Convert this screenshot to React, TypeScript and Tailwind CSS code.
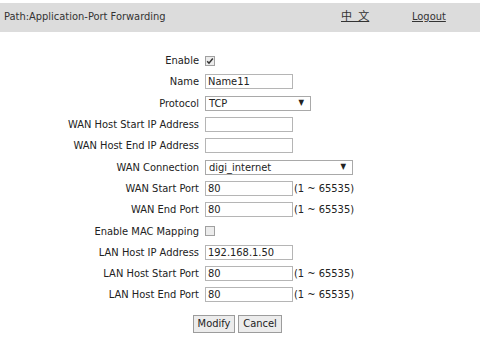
import React from "react";

const font = { fontFamily: '"DejaVu Sans Condensed", "DejaVu Sans", "Noto Sans CJK SC", sans-serif' };

type Row = {
    label: string;
    kind: "check" | "text" | "select";
    value?: string;
    checked?: boolean;
    width?: string;
    range?: boolean;
};

const rows: Row[] = [
    { label: "Enable", kind: "check", checked: true },
    { label: "Name", kind: "text", value: "Name11" },
    { label: "Protocol", kind: "select", value: "TCP", width: "w-[106px]" },
    { label: "WAN Host Start IP Address", kind: "text", value: "" },
    { label: "WAN Host End IP Address", kind: "text", value: "" },
    { label: "WAN Connection", kind: "select", value: "digi_internet", width: "w-[148px]" },
    { label: "WAN Start Port", kind: "text", value: "80", range: true },
    { label: "WAN End Port", kind: "text", value: "80", range: true },
    { label: "Enable MAC Mapping", kind: "check", checked: false },
    { label: "LAN Host IP Address", kind: "text", value: "192.168.1.50" },
    { label: "LAN Host Start Port", kind: "text", value: "80", range: true },
    { label: "LAN Host End Port", kind: "text", value: "80", range: true },
];

const Checkbox = ({ checked }: { checked?: boolean }) => (
    <span className="flex h-[10px] w-[10px] items-center justify-center border border-[#a0a0a0] bg-[#ececec]">
        {checked && (
            <svg width="8" height="8" viewBox="0 0 8 8">
                <path d="M1.2 4.2 L3 6.2 L6.8 1.5" fill="none" stroke="#333" strokeWidth="1.5" />
            </svg>
        )}
    </span>
);

const Field = ({ row }: { row: Row }) => {
    if (row.kind === "check") return <Checkbox checked={row.checked} />;
    if (row.kind === "select")
        return (
            <div className={`flex h-[15px] items-center justify-between border border-[#a9a9a9] bg-white pl-[3px] pr-[6px] ${row.width}`}>
                <span>{row.value}</span>
                <span className="text-[8px]">▼</span>
            </div>
        );
    return (
        <div className="flex items-center">
            <div className="flex h-[15px] w-[88px] items-center border border-[#b5b5b5] bg-white pl-[2px]">{row.value}</div>
            {row.range && <span className="ml-[1px]">(1 ~ 65535)</span>}
        </div>
    );
};

export default function App() {
    return (
        <div className="h-[345px] w-[480px] bg-white text-[11px] leading-none text-[#222]" style={font}>
            <div className="pt-[3px]">
                <div className="flex h-[29px] items-start bg-[#dcdcdc] pt-[8px] pl-[4px] text-[#333]">
                    <span className="w-[337px]">Path:Application-Port Forwarding</span>
                    <span className="w-[71px]">
                        <span className="underline">中&nbsp;&nbsp;文</span>
                    </span>
                    <span className="underline">Logout</span>
                </div>
            </div>
            <div className="mt-[18px] flex flex-col">
                {rows.map((row) => (
                    <div key={row.label} className="flex h-[21.3px] items-center">
                        <span className="w-[205px] pr-[6px] text-right">{row.label}</span>
                        <Field row={row} />
                    </div>
                ))}
            </div>
            <div className="mt-[9px] ml-[193px] flex gap-[3px]">
                <button className="h-[18px] w-[42px] border border-[#9c9c9c] bg-[#ececec] text-[11px]">Modify</button>
                <button className="h-[18px] w-[44px] border border-[#9c9c9c] bg-[#ececec] text-[11px]">Cancel</button>
            </div>
        </div>
    );
}
